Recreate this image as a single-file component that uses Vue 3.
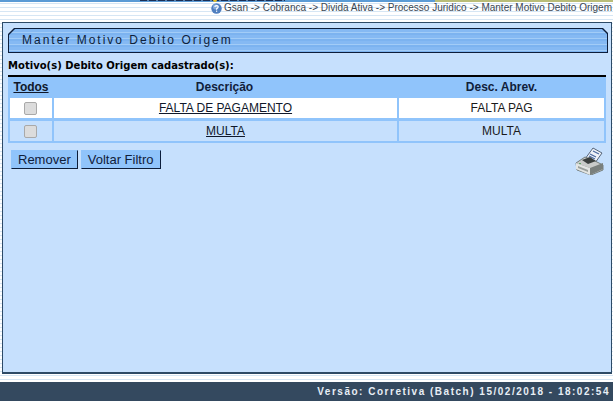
<template>
  <div class="page">
    <div class="topbar">
      <div class="top-blue"><span class="cut-text"></span><span class="dot"></span></div>
      <div class="top-olive"></div>
    </div>
    <div class="crumb">
      <svg class="help" width="11" height="11" viewBox="0 0 11 11">
        <circle cx="5.5" cy="5.5" r="5.2" fill="#4f7fc0" />
        <circle cx="4.5" cy="3.8" r="2.6" fill="#9dbde6" opacity=".7" />
        <path d="M3.8 4 Q4 2.6 5.6 2.6 Q7.3 2.7 7.2 4 Q7.1 4.9 5.7 5.6 L5.6 6.8" fill="none" stroke="#fff" stroke-width="1.2" />
        <rect x="5" y="7.6" width="1.2" height="1.2" fill="#fff" />
      </svg>
      <span>Gsan -&gt; Cobranca -&gt; Divida Ativa -&gt; Processo Juridico -&gt; Manter Motivo Debito Origem</span>
    </div>
    <main class="panel">
      <div class="title">
        <div class="title-in"><span>Manter Motivo Debito Origem</span></div>
      </div>
      <p class="subtitle">Motivo(s) Debito Origem cadastrado(s):</p>
      <table class="grid">
        <colgroup>
          <col class="c1" />
          <col class="c2" />
          <col class="c3" />
        </colgroup>
        <thead>
          <tr>
            <th><a class="link">Todos</a></th>
            <th>Descrição</th>
            <th>Desc. Abrev.</th>
          </tr>
        </thead>
        <tbody>
          <tr v-for="(r, i) in rows" :key="r.a" :class="i % 2 ? 'odd' : 'even'">
            <td><span class="check"></span></td>
            <td><a class="link">{{ r.d }}</a></td>
            <td>{{ r.a }}</td>
          </tr>
        </tbody>
      </table>
      <div class="actions">
        <div class="btns">
          <button>Remover</button>
          <button>Voltar Filtro</button>
        </div>
        <svg class="printer" width="30" height="28" viewBox="0 0 30 28">
          <path d="M11 12 L19 1 L28 6 L21 16 Z" fill="#eef2f8" stroke="#55657a" stroke-width="1" />
          <path d="M16 7 L22 10 M15 9 L21 12 M14 11 L19 14 M19 4 L25 7" stroke="#4a6aa0" stroke-width="1.2" />
          <path d="M2 16 L11 10 L21 14 L29 18 L29 23 L17 28 L3 23 Z" fill="#c9cbc9" stroke="#5f6864" stroke-width=".8" />
          <path d="M2 16 L16 21 L29 16 L29 22 L16 28 L2 22 Z" fill="#7a807d" />
          <path d="M2 16 L16 21 L16 28 L2 22 Z" fill="#e3e5e3" />
          <path d="M4 19 L14 23 L14 25 L4 21 Z" fill="#9aa09d" />
          <path d="M8 13 L16 10 L22 14 L14 17 Z" fill="#3b403e" />
          <rect x="5" y="16" width="2" height="1" fill="#5fa868" />
        </svg>
      </div>
    </main>
    <footer class="footer">Versão: Corretiva (Batch) 15/02/2018 - 18:02:54</footer>
  </div>
</template>

<script setup>
const rows = [
  { d: 'FALTA DE PAGAMENTO', a: 'FALTA PAG' },
  { d: 'MULTA', a: 'MULTA' },
]
</script>

<style>
html, body { margin: 0; background: #fff; overflow: hidden; }
</style>

<style scoped>
.page {
  width: 613px;
  height: 401px;
  display: flex;
  flex-direction: column;
  overflow: hidden;
  font-family: "Liberation Sans", Arial, sans-serif;
  color: #000;
  background: repeating-linear-gradient(to bottom, #fff 0, #fff 3px, #d6e6f4 3px, #d6e6f4 4px);
}
.topbar { height: 2px; display: flex; flex: none; }
.top-blue { width: 435px; background: #5b9bd5; position: relative; }
.cut-text {
  position: absolute; left: 140px; top: 0; width: 145px; height: 1px;
  background: repeating-linear-gradient(to right, #1b2f55 0, #1b2f55 7px, #5b84b0 7px, #5b84b0 9px);
}
.dot { position: absolute; left: 213px; top: 0; width: 4px; height: 2px; background: #e8c020; border-radius: 0 0 2px 2px; }
.top-olive { flex: 1; background: #b9bd78; }
.crumb {
  height: 20px; flex: none; box-sizing: border-box;
  display: flex; justify-content: flex-end; align-items: flex-start; gap: 2px;
  white-space: nowrap; padding-right: 1px;
  font-size: 10px; line-height: 12px; color: #3a4652;
}
.help { flex: none; margin-top: 1px; }
.panel {
  flex: none; height: 352px; margin: 0 1px 0 2px; box-sizing: border-box;
  background: #c6e0fd; border: 1px solid #2d4a66; border-bottom-width: 2px;
  padding: 5px 5px 0 5px;
}
.title {
  height: 25px; width: 600px; padding: 1px; box-sizing: border-box;
  background: #0c1d3a;
  clip-path: polygon(6px 0, calc(100% - 5px) 0, 100% 5px, 100% 100%, 0 100%, 0 6px);
}
.title-in {
  height: 100%; box-sizing: border-box;
  clip-path: polygon(6px 0, calc(100% - 5px) 0, 100% 5px, 100% 100%, 0 100%, 0 6px);
  background: repeating-linear-gradient(to bottom, #85b9f3 0, #85b9f3 3px, #a2ccf7 3px, #a2ccf7 4px, #7cb3f0 4px, #7cb3f0 6px);
  padding: 0 0 1px 13px; display: flex; align-items: center;
  font-size: 12px; letter-spacing: 2px; color: #0e1f3c;
}
.subtitle {
  margin: 6px 0 0; font-family: "DejaVu Sans", sans-serif; font-size: 10px; font-weight: bold; line-height: 13px; letter-spacing: .03px;
}
.grid {
  margin: 3px 0 0 0; width: 598px; table-layout: fixed; border-collapse: separate; border-spacing: 0;
  border-top: 2px solid #000; font-size: 12px;
  background: #90c4fb;
}
.c1 { width: 44px; }
.c3 { width: 209px; }
th { height: 20px; padding: 0; background: #90c4fb; font-weight: bold; font-size: 12px; color: #10203a; text-align: center; }
th:first-child { padding-left: 2px; }
td { height: 20px; padding: 0; text-align: center; border-left: 2px solid #90c4fb; border-bottom: 2px solid #90c4fb; border-top: 1px solid #90c4fb; color: #1a1a1a; }
td:last-child { border-right: 2px solid #90c4fb; }
.even td { background: #fff; }
.odd td { background: #c6e0fd; }
.link { text-decoration: underline; color: #10182a; }
.check {
  display: inline-block; width: 11px; height: 11px; vertical-align: middle; margin-right: 1px;
  background: #dcdcdc; border: 1px solid #a9a9a9; border-radius: 2px;
}
.actions { display: flex; justify-content: space-between; align-items: flex-start; padding: 7px 1px 0 3px; }
.btns { display: flex; gap: 3px; }
button {
  height: 19px; padding: 0 6px; margin: 0; font-family: inherit; font-size: 13px; line-height: 15px; color: #10203a;
  background: #90c4fb; border: 1px solid #90c4fb; border-right-color: #0c1d3a; border-bottom-color: #0c1d3a;
  border-radius: 0;
}
.printer { margin-top: -3px; margin-right: 1px; }
.footer {
  margin-top: 8px; flex: 1; background: #34495f; color: #e8eef5;
  display: flex; align-items: center; justify-content: flex-end; padding-right: 3px; padding-bottom: 1px;
  font-size: 10px; font-weight: bold; letter-spacing: 1.51px; white-space: nowrap;
}
</style>
